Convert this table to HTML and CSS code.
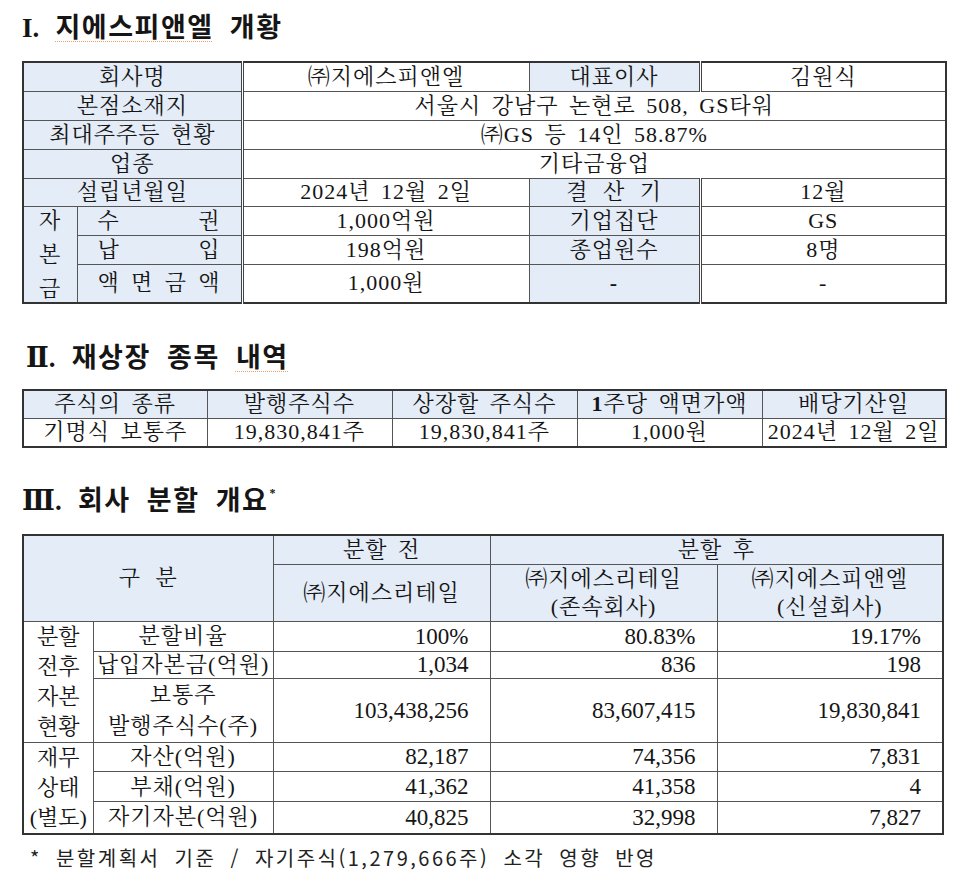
FILE: index.html
```html
<!DOCTYPE html>
<html lang="ko">
<head>
<meta charset="utf-8">
<title>지에스피앤엘 개황</title>
<link rel="stylesheet" href="styles.css">
</head>
<body>
<main class="doc">
  <h2 class="title t-first"><span class="num">I.</span> <span class="spell">지에스피앤엘</span> 개황</h2>
  <table class="t t1">
    <colgroup><col class="w54"><col class="w165"><col class="w287"><col class="w171"><col class="w246"></colgroup>
    <tr class="r29"><th colspan="2">회사명</th><td class="dbl">㈜지에스피앤엘</td><th>대표이사</th><td class="dbl">김원식</td></tr>
    <tr class="r29"><th colspan="2">본점소재지</th><td class="dbl" colspan="3">서울시 강남구 논현로 508, GS타워</td></tr>
    <tr class="r29"><th colspan="2">최대주주등 현황</th><td class="dbl" colspan="3">㈜GS 등 14인 58.87%</td></tr>
    <tr class="r29"><th colspan="2">업종</th><td class="dbl" colspan="3">기타금융업</td></tr>
    <tr class="r28"><th colspan="2">설립년월일</th><td class="dbl">2024년 12월 2일</td><th class="wide">결 산 기</th><td class="dbl">12월</td></tr>
    <tr class="r29">
      <th rowspan="3" class="vert"><div class="stack"><span>자</span><span>본</span><span>금</span></div></th>
      <th><div class="just"><span>수</span><span>권</span></div></th>
      <td class="dbl">1,000억원</td><th>기업집단</th><td class="dbl">GS</td>
    </tr>
    <tr class="r29"><th><div class="just"><span>납</span><span>입</span></div></th><td class="dbl">198억원</td><th>종업원수</th><td class="dbl">8명</td></tr>
    <tr class="r39"><th><div class="just"><span>액</span><span>면</span><span>금</span><span>액</span></div></th><td class="dbl">1,000원</td><th class="b">-</th><td class="dbl">-</td></tr>
  </table>

  <h2 class="title t-second"><span class="num">Ⅱ.</span> 재상장 종목 <span class="spell">내역</span></h2>
  <table class="t t2">
    <colgroup><col class="w184"><col class="w185"><col class="w185"><col class="w185"><col class="w184"></colgroup>
    <tr class="r28"><th>주식의 종류</th><th>발행주식수</th><th>상장할 주식수</th><th><b>1</b>주당 액면가액</th><th>배당기산일</th></tr>
    <tr class="r29"><td>기명식 보통주</td><td>19,830,841주</td><td>19,830,841주</td><td>1,000원</td><td>2024년 12월 2일</td></tr>
  </table>

  <h2 class="title t-third"><span class="num">Ⅲ.</span> 회사 분할 개요<sup class="ast">*</sup></h2>
  <table class="t t3">
    <colgroup><col class="w70"><col class="w180"><col class="w217"><col class="w227"><col class="w226"></colgroup>
    <tr class="r29"><th colspan="2" rowspan="2" class="wide">구 분</th><th>분할 전</th><th colspan="2">분할 후</th></tr>
    <tr class="r57"><th class="hb">㈜지에스리테일</th><th class="hb two">㈜지에스리테일<br>(존속회사)</th><th class="hb two">㈜지에스피앤엘<br>(신설회사)</th></tr>
    <tr class="r30">
      <td rowspan="3" class="grp"><div class="lines"><span>분할</span><span>전후</span><span>자본</span><span>현황</span></div></td>
      <td>분할비율</td><td class="num">100%</td><td class="num">80.83%</td><td class="num">19.17%</td>
    </tr>
    <tr class="r27"><td>납입자본금(억원)</td><td class="num">1,034</td><td class="num">836</td><td class="num">198</td></tr>
    <tr class="r62"><td class="two2">보통주<br>발행주식수(주)</td><td class="num">103,438,256</td><td class="num">83,607,415</td><td class="num">19,830,841</td></tr>
    <tr class="r29">
      <td rowspan="3" class="grp"><div class="lines l3"><span>재무</span><span>상태</span><span>(별도)</span></div></td>
      <td>자산(억원)</td><td class="num">82,187</td><td class="num">74,356</td><td class="num">7,831</td>
    </tr>
    <tr class="r29"><td>부채(억원)</td><td class="num">41,362</td><td class="num">41,358</td><td class="num">4</td></tr>
    <tr class="r31"><td>자기자본(억원)</td><td class="num">40,825</td><td class="num">32,998</td><td class="num">7,827</td></tr>
  </table>

  <p class="note">* 분할계획서 기준 / 자기주식(1,279,666주) 소각 영향 반영</p>
</main>
</body>
</html>
```

FILE: styles.css
```css
* { box-sizing: border-box; }
html, body { margin: 0; padding: 0; background: #ffffff; }
body {
  font-family: "Liberation Serif", "Noto Serif CJK KR", "Noto Sans CJK KR", serif;
  color: #151515;
}
.doc { width: 960px; padding: 12px 0 0 22px; }

.title {
  margin: 0;
  height: 32px;
  line-height: 32px;
  font-size: 27px;
  font-weight: 700;
  font-family: "Liberation Serif", "DejaVu Serif", "Noto Sans CJK KR", serif;
  letter-spacing: 1.5px;
  word-spacing: 8px;
  white-space: nowrap;
}
.title .num { font-weight: 700; letter-spacing: 0; }
.title .spell {
  text-decoration: underline dotted #f0a060;
  text-underline-offset: 4px;
  text-decoration-thickness: 1px;
}
.t-second { margin-top: 38px; padding-left: 4px; }
.t-third { margin-top: 37px; padding-left: 0; }
.ast { font-size: 12px; vertical-align: top; line-height: 12px; position: relative; top: 2px; margin-left: 1px; }

.t {
  border-collapse: collapse;
  table-layout: fixed;
  border: 2px solid #333;
  font-size: 22px;
  letter-spacing: 1px;
  word-spacing: 4px;
}
.t th, .t td {
  border: 1px solid #555;
  padding: 0;
  text-align: center;
  vertical-align: middle;
  font-weight: normal;
  white-space: nowrap;
  line-height: 1;
  overflow: hidden;
}
.t th { background: #e4ecf7; }
.t .dbl { border-left: 3px double #444; }
.t .b { font-weight: 700; }
.t .wide { word-spacing: 8px; }

.t1 { margin-top: 17px; width: 923px; }
.t2 { margin-top: 15px; width: 923px; }
.t3 { margin-top: 17px; width: 920px; }

.w54 { width: 54px; } .w165 { width: 165px; } .w287 { width: 287px; }
.w171 { width: 171px; } .w246 { width: 246px; }
.w184 { width: 184px; } .w185 { width: 185px; }
.w70 { width: 70px; } .w180 { width: 180px; } .w217 { width: 217px; }
.w227 { width: 227px; } .w226 { width: 226px; }

.r27 { height: 27px; } .r28 { height: 28px; } .r29 { height: 29px; } .r30 { height: 30px; }
.r31 { height: 31px; } .r39 { height: 39px; } .r57 { height: 57px; }
.r62 { height: 62px; }

.stack {
  display: flex;
  flex-direction: column;
  align-items: center;
  justify-content: space-between;
  height: 92px;
  padding: 2px 0 0;
}
.just {
  display: flex;
  justify-content: space-between;
  padding: 0 20px;
}

.t3 .hb { line-height: 28px; }
.t3 .two { line-height: 28px; }
.t3 .two2 { line-height: 31px; }
.t3 .num { text-align: right; padding-right: 21px; font-size: 23px; letter-spacing: 0; }
.grp .lines {
  display: flex;
  flex-direction: column;
  align-items: center;
  line-height: 30px;
  letter-spacing: 0;
}

.note {
  margin: 9px 0 0 8px;
  font-family: "Noto Sans CJK KR", "Noto Sans", sans-serif;
  font-size: 20px;
  line-height: 28px;
  letter-spacing: 2.5px;
  word-spacing: 6px;
  color: #222;
  white-space: nowrap;
}
```
